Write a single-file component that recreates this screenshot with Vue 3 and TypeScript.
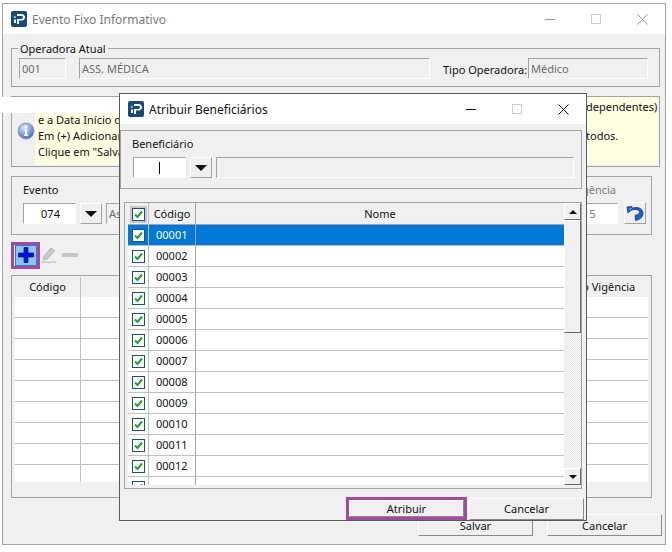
<template>
  <div class="desktop">
    <!-- Janela principal -->
    <section class="window main-window">
      <header class="titlebar">
        <svg class="logo" viewBox="0 0 16 16">
          <rect width="16" height="16" rx="2" fill="#17497d" />
          <path d="M6 3h4.6C12.6 3 14 4.3 14 6.2S12.6 9.5 10.6 9.5H8V13H6V8h4.4c.9 0 1.5-.7 1.5-1.7S11.300 5 10.400 5H6z" fill="#fff" />
          <circle cx="3.800" cy="6" r="1.300" fill="#5cc0ee" />
          <path d="M3 8.500h2V12H3z" fill="#fff" />
        </svg>
        <span class="title muted">Evento Fixo Informativo</span>
        <div class="controls inactive">
          <span class="ctl"><i class="ctl-min"></i></span>
          <span class="ctl"><i class="ctl-max"></i></span>
          <span class="ctl">
            <svg width="11" height="11" viewBox="0 0 11 11"><path d="M.5.500l10 10M10.500.500l-10 10" stroke="currentColor" fill="none" /></svg>
          </span>
        </div>
      </header>

      <div class="main-body">
        <div class="group operadora">
          <span class="legend">Operadora Atual</span>
          <div class="field disabled w-code">001</div>
          <div class="field disabled w-name">ASS. MÉDICA</div>
          <span class="tipo-label">Tipo Operadora:</span>
          <div class="field disabled w-tipo">Médico</div>
        </div>

        <div class="group info">
          <svg class="info-icon" viewBox="0 0 18 18">
            <defs>
              <radialGradient id="infoFill" cx="40%" cy="30%" r="75%">
                <stop offset="0" stop-color="#dfe9fa" />
                <stop offset="1" stop-color="#3566c2" />
              </radialGradient>
            </defs>
            <circle cx="9" cy="9" r="8" fill="url(#infoFill)" stroke="#8f9cb5" />
            <circle cx="9" cy="5" r="1.400" fill="#fff" />
            <path d="M7.500 7.500h2.700v5.300h1v1.200H7v-1.200h1V8.700h-.5z" fill="#fff" />
          </svg>
          <div class="info-text">
            <p class="info-line first"><span class="left"></span><span>dependentes)</span></p>
            <p class="info-line"><span class="left">e a Data Início de</span></p>
            <p class="info-line"><span class="left">Em (+) Adicionar</span><span>todos.</span></p>
            <p class="info-line"><span class="left">Clique em "Salvar</span></p>
          </div>
        </div>

        <div class="group evento">
          <div class="evento-main">
            <label class="field-label">Evento</label>
            <div class="evento-row">
              <div class="field white w-combo">074</div>
              <button class="drop"><i class="arrow-down"></i></button>
              <div class="field disabled grow">As</div>
            </div>
          </div>
          <div class="vigencia">
            <label class="field-label muted">Vigência</label>
            <div class="evento-row">
              <div class="field white w-date muted">01/01/2015</div>
              <button class="undo">
                <svg width="20" height="18" viewBox="0 0 20 18">
                  <path d="M7 2.500l-5 .5 1 6 1.800-1.800C7 5.400 10.500 4.800 13 6c2.200 1 2 3.500-.5 4.500l-2.500 1 .5 5c3-.5 7-2.500 7.500-6.500.4-4-3-6.500-6.500-6.500-2 0-3.400.4-4.500 1z" fill="#1c62c8" stroke="#0c3a92" stroke-width=".8" />
                  <path d="M4.500 4.500l2.500-.3-2 2z" fill="#9cc6f5" />
                </svg>
              </button>
            </div>
          </div>
        </div>

        <div class="toolbar">
          <span class="plus-mark">
            <button class="plus-btn">
              <svg width="18" height="18" viewBox="0 0 18 18"><path d="M7 1.500h4V7h5.500v4H11v5.500H7V11H1.500V7H7z" fill="#0010e0" stroke="#00156e" stroke-width=".7" /></svg>
            </button>
          </span>
          <svg class="pencil" width="18" height="20" viewBox="0 0 18 20">
            <path d="M4 11l7-8 3.500 2.800-7 8-4.200 1z" fill="#c9c9c9" stroke="#b3b3b3" />
            <path d="M1 18c3-3 5 0 8-.5s4-1 7-.5" fill="none" stroke="#c4c4c4" stroke-width="1.300" />
          </svg>
          <i class="minus"></i>
        </div>

        <div class="group grid-group">
          <div class="main-grid">
            <div class="main-row head">
              <span class="cell center">Código</span>
              <span class="cell"></span>
              <span class="cell center">Início Vigência</span>
            </div>
            <div v-for="n in 9" :key="n" class="main-row">
              <span class="cell"></span>
              <span class="cell"></span>
              <span class="cell"></span>
            </div>
          </div>
        </div>

        <div class="footer">
          <button class="btn">Salvar</button>
          <button class="btn">Cancelar</button>
        </div>
      </div>
    </section>

    <!-- Faixa branca que sobra da captura -->
    <div class="strip"></div>

    <!-- Dialogo por cima -->
    <section class="window dialog">
      <header class="titlebar">
        <svg class="logo" viewBox="0 0 16 16">
          <rect width="16" height="16" rx="2" fill="#17497d" />
          <path d="M6 3h4.600C12.600 3 14 4.300 14 6.200S12.600 9.500 10.600 9.500H8V13H6V8h4.400c.9 0 1.500-.7 1.500-1.700S11.300 5 10.400 5H6z" fill="#fff" />
          <circle cx="3.800" cy="6" r="1.300" fill="#5cc0ee" />
          <path d="M3 8.500h2V12H3z" fill="#fff" />
        </svg>
        <span class="title">Atribuir Beneficiários</span>
        <div class="controls">
          <span class="ctl"><i class="ctl-min"></i></span>
          <span class="ctl"><i class="ctl-max"></i></span>
          <span class="ctl">
            <svg width="11" height="11" viewBox="0 0 11 11"><path d="M.5.500l10 10M10.500.500l-10 10" stroke="currentColor" fill="none" /></svg>
          </span>
        </div>
      </header>

      <div class="dialog-body">
        <div class="group benef">
          <label class="field-label">Beneficiário</label>
          <div class="evento-row">
            <div class="field white w-benef"><i class="caret"></i></div>
            <button class="drop"><i class="arrow-down"></i></button>
            <div class="field disabled grow"></div>
          </div>
        </div>

        <div class="benef-grid">
          <div class="benef-table">
            <div class="benef-row head">
              <span class="c-check"><span class="check-wrap"><i class="check"><svg viewBox="0 0 11 11"><path d="M2 5.500l2.500 2.500L9 2.500" fill="none" stroke="#1fa02f" stroke-width="2" /></svg></i></span></span>
              <span class="c-code center">Código</span>
              <span class="c-name center">Nome</span>
            </div>
            <div
              v-for="(code, i) in codes"
              :key="code"
              class="benef-row"
              :class="{ selected: i === 0 }"
            >
              <span class="c-check"><i class="check"><svg viewBox="0 0 11 11"><path d="M2 5.500l2.500 2.500L9 2.500" fill="none" stroke="#1fa02f" stroke-width="2" /></svg></i></span>
              <span class="c-code">{{ code }}</span>
              <span class="c-name"></span>
            </div>
          </div>
          <div class="scrollbar">
            <button class="sb-btn"><i class="arrow-up"></i></button>
            <div class="sb-thumb"></div>
            <div class="sb-track"></div>
            <button class="sb-btn"><i class="arrow-down small"></i></button>
          </div>
        </div>

        <div class="dialog-footer">
          <span class="atribuir-mark"><button class="btn inner">Atribuir</button></span>
          <button class="btn">Cancelar</button>
        </div>
      </div>
    </section>
  </div>
</template>

<script setup lang="ts">
  // Codigos da lista de beneficiarios (00001 a 00012, mais a linha cortada)
  const codes: string[] = Array.from({ length: 12 }, (_, i) =>
    String(i + 1).padStart(5, "0")
  ).concat("");
</script>

<style>
  html,
  body {
    margin: 0;
    background: #fff;
  }
</style>

<style scoped>
  .desktop {
    position: relative;
    width: 672px;
    height: 552px;
    overflow: hidden;
    font-family: "Noto Sans", sans-serif;
    font-size: 11px;
    color: #111;
    background: #fff;
  }

  p {
    margin: 0;
  }

  i {
    display: block;
  }

  button {
    padding: 0;
    font: inherit;
    color: inherit;
    background: #f0f0f0;
    border: 1px solid;
    border-color: #fff #8a8a8a #8a8a8a #fff;
    display: flex;
    align-items: center;
    justify-content: center;
  }

  .muted {
    color: #7a7a7a;
  }

  /* Janelas */
  .window {
    position: absolute;
    box-sizing: border-box;
    background: #f0f0f0;
    border: 1px solid #a3a3a3;
    display: flex;
    flex-direction: column;
  }

  .main-window {
    left: 2px;
    top: 3px;
    width: 664px;
    height: 542px;
  }

  .dialog {
    left: 119px;
    top: 93px;
    width: 468px;
    height: 428px;
    border-color: #5a5a5a;
  }

  .titlebar {
    flex: none;
    height: 30px;
    background: #fff;
    display: flex;
    align-items: center;
    padding-left: 8px;
  }

  .dialog .titlebar {
    padding-top: 0;
  }

  .logo {
    width: 16px;
    height: 16px;
    margin-right: 5px;
  }

  .title {
    font-size: 12px;
  }

  .controls {
    margin-left: auto;
    display: flex;
    color: #111;
  }

  .controls.inactive {
    color: #9a9a9a;
  }

  .ctl {
    width: 46px;
    height: 30px;
    display: flex;
    align-items: center;
    justify-content: center;
  }

  .ctl-min {
    width: 10px;
    height: 1px;
    background: currentColor;
  }

  .ctl-max {
    box-sizing: border-box;
    width: 10px;
    height: 10px;
    border: 1px solid #cdcdcd;
  }

  /* Grupos e campos */
  .group {
    position: relative;
    box-sizing: border-box;
    border: 1px solid #a3a3a3;
  }

  .legend {
    position: absolute;
    left: 6px;
    top: -7px;
    padding: 0 2px;
    background: #f0f0f0;
    line-height: 14px;
  }

  .field {
    box-sizing: border-box;
    height: 21px;
    padding-left: 2px;
    line-height: 19px;
    border: 1px solid;
    border-color: #a3a3a3 #fff #fff #a3a3a3;
    white-space: nowrap;
    overflow: hidden;
  }

  .field.disabled {
    color: #6d6d6d;
  }

  .field.white {
    background: #fff;
  }

  .field-label {
    display: block;
    line-height: 14px;
    margin-bottom: 6px;
  }

  .grow {
    flex: 1;
  }

  .main-body {
    flex: 1;
    padding-left: 8px;
  }

  .operadora {
    margin-top: 14px;
    width: 649px;
    height: 39px;
    padding: 9px 11px 0 7px;
    display: flex;
    align-items: flex-start;
  }

  .w-code {
    width: 47px;
  }

  .w-name {
    width: 351px;
    margin-left: 13px;
  }

  .tipo-label {
    margin-left: 13px;
    line-height: 23px;
    width: 85px;
  }

  .w-tipo {
    width: 120px;
  }

  .info {
    margin-top: 9px;
    width: 649px;
    height: 71px;
    padding: 0 1px 1px 5px;
    display: flex;
    align-items: stretch;
  }

  .info-icon {
    width: 18px;
    height: 18px;
    margin-top: 25px;
    flex: none;
  }

  .info-text {
    flex: 1;
    margin-left: 0;
    padding: 2px 0 0 3px;
    background: #ffffe1;
  }

  .info-line {
    display: flex;
    height: 16px;
    line-height: 16px;
    white-space: nowrap;
  }

  .info-line.first {
    margin-bottom: -3px;
  }

  .info-line .left {
    width: 548px;
    flex: none;
  }

  .evento {
    margin-top: 9px;
    width: 641px;
    height: 59px;
    padding: 6px 5px 0 11px;
    display: flex;
    gap: 13px;
  }

  .evento-main {
    flex: 1;
  }

  .evento-row {
    display: flex;
    align-items: flex-start;
  }

  .w-combo {
    width: 53px;
    text-align: center;
    margin-right: 4px;
  }

  .drop {
    box-sizing: border-box;
    width: 22px;
    height: 21px;
    margin-right: 4px;
    flex: none;
    border-color: #fff #a3a3a3 #a3a3a3 #fff;
  }

  .arrow-down {
    width: 0;
    height: 0;
    border-left: 6px solid transparent;
    border-right: 6px solid transparent;
    border-top: 6px solid #111;
  }

  .arrow-down.small {
    border-left-width: 4px;
    border-right-width: 4px;
    border-top-width: 4px;
  }

  .arrow-up {
    width: 0;
    height: 0;
    border-left: 4px solid transparent;
    border-right: 4px solid transparent;
    border-bottom: 4px solid #111;
  }

  .vigencia {
    width: 115px;
    text-align: right;
  }

  .vigencia .field-label {
    padding-right: 30px;
  }

  .w-date {
    width: 87px;
    text-align: left;
    margin-right: 6px;
    padding-left: 5px;
  }

  .undo {
    box-sizing: border-box;
    width: 22px;
    height: 22px;
    margin-top: -1px;
    border-color: #fff #a3a3a3 #a3a3a3 #fff;
  }

  /* Barra de ferramentas */
  .toolbar {
    height: 40px;
    display: flex;
    align-items: center;
  }

  .plus-mark {
    box-sizing: border-box;
    width: 29px;
    height: 27px;
    border: 3px solid #a349a4;
    display: flex;
    padding-left: 1px;
    margin-top: 0;
  }

  .plus-btn {
    width: 22px;
    height: 21px;
    background: #8fc3f0;
    border: 1px solid #2a7fd0;
  }

  .pencil {
    margin-left: 0;
  }

  .minus {
    width: 16px;
    height: 4px;
    margin-left: 4px;
    background: #c6c6c6;
    border-radius: 1px;
  }

  /* Grade principal */
  .grid-group {
    width: 641px;
    height: 223px;
    padding: 1px 3px 0;
  }

  .main-grid {
    height: 205px;
    overflow: hidden;
    background: #fff;
  }

  .main-row {
    display: grid;
    grid-template-columns: 66px 1fr 100px;
    height: 21px;
    box-sizing: border-box;
    border-bottom: 1px solid #c0c0c0;
  }

  .main-row.head {
    height: 20px;
    background: #f0f0f0;
    border-bottom: 0;
    line-height: 20px;
  }

  .cell:first-child {
    border-right: 1px solid #c0c0c0;
  }

  .center {
    text-align: center;
  }

  /* Rodape */
  .footer {
    margin-top: 16px;
    padding-right: 3px;
    display: flex;
    justify-content: flex-end;
    gap: 14px;
    padding-right: 3px;
  }

  .btn {
    box-sizing: border-box;
    width: 115px;
    height: 22px;
  }

  /* Dialogo */
  .dialog-body {
    flex: 1;
  }

  .benef {
    margin-top: 6px;
    width: 462px;
    height: 59px;
    padding: 6px 7px 0 11px;
  }

  .w-benef {
    width: 53px;
    margin-left: 1px;
    margin-right: 4px;
    position: relative;
  }

  .caret {
    position: absolute;
    left: 25px;
    top: 4px;
    width: 1px;
    height: 12px;
    background: #000;
  }

  .benef-grid {
    box-sizing: border-box;
    margin: 13px 0 0 4px;
    width: 458px;
    height: 287px;
    border: 1px solid #a3a3a3;
    padding: 0 0 3px 3px;
    display: flex;
  }

  .benef-table {
    flex: 1;
    overflow: hidden;
  }

  .benef-row {
    display: grid;
    grid-template-columns: 21px 47px 1fr;
    height: 21px;
    box-sizing: border-box;
    background: #fff;
    border-bottom: 1px solid #c0c0c0;
    line-height: 20px;
  }

  .benef-row.head {
    height: 22px;
    background: #f0f0f0;
    border-bottom: 1px solid #a3a3a3;
    line-height: 22px;
  }

  .benef-row.selected {
    background: #0078d7;
    color: #fff;
  }

  .c-check {
    border-right: 1px solid #c0c0c0;
    display: flex;
    align-items: center;
    justify-content: center;
  }

  .c-code {
    border-right: 1px solid #a3a3a3;
    padding-left: 7px;
  }

  .c-code.center {
    padding-left: 0;
  }

  .check-wrap {
    width: 17px;
    height: 17px;
    background: #c8c8c8;
    display: flex;
    align-items: center;
    justify-content: center;
  }

  .check {
    box-sizing: border-box;
    width: 13px;
    height: 13px;
    background: #fff;
    border: 1px solid #1f4f7c;
  }

  .check svg {
    display: block;
    width: 11px;
    height: 11px;
  }

  .scrollbar {
    flex: none;
    width: 17px;
    display: flex;
    flex-direction: column;
  }

  .sb-btn {
    box-sizing: border-box;
    height: 17px;
    flex: none;
    border-color: #fff #696969 #696969 #fff;
  }

  .sb-thumb {
    box-sizing: border-box;
    height: 113px;
    flex: none;
    background: #f0f0f0;
    border: 1px solid;
    border-color: #fff #696969 #696969 #fff;
  }

  .sb-track {
    flex: 1;
    background: repeating-conic-gradient(#e6e6e6 0 25%, #fafafa 0 50%) 0 0 / 2px 2px;
  }

  .dialog-footer {
    margin-top: 8px;
    padding-right: 2px;
    display: flex;
    justify-content: flex-end;
    align-items: center;
    gap: 2px;
  }

  .atribuir-mark {
    box-sizing: border-box;
    width: 121px;
    height: 23px;
    border: 3px solid #a349a4;
    display: flex;
  }

  .btn.inner {
    width: 100%;
    height: 100%;
  }

  /* Faixa branca que sobra da captura */
  .strip {
    position: absolute;
    left: 0;
    top: 97px;
    width: 120px;
    height: 16px;
    background: #fff;
  }
</style>
